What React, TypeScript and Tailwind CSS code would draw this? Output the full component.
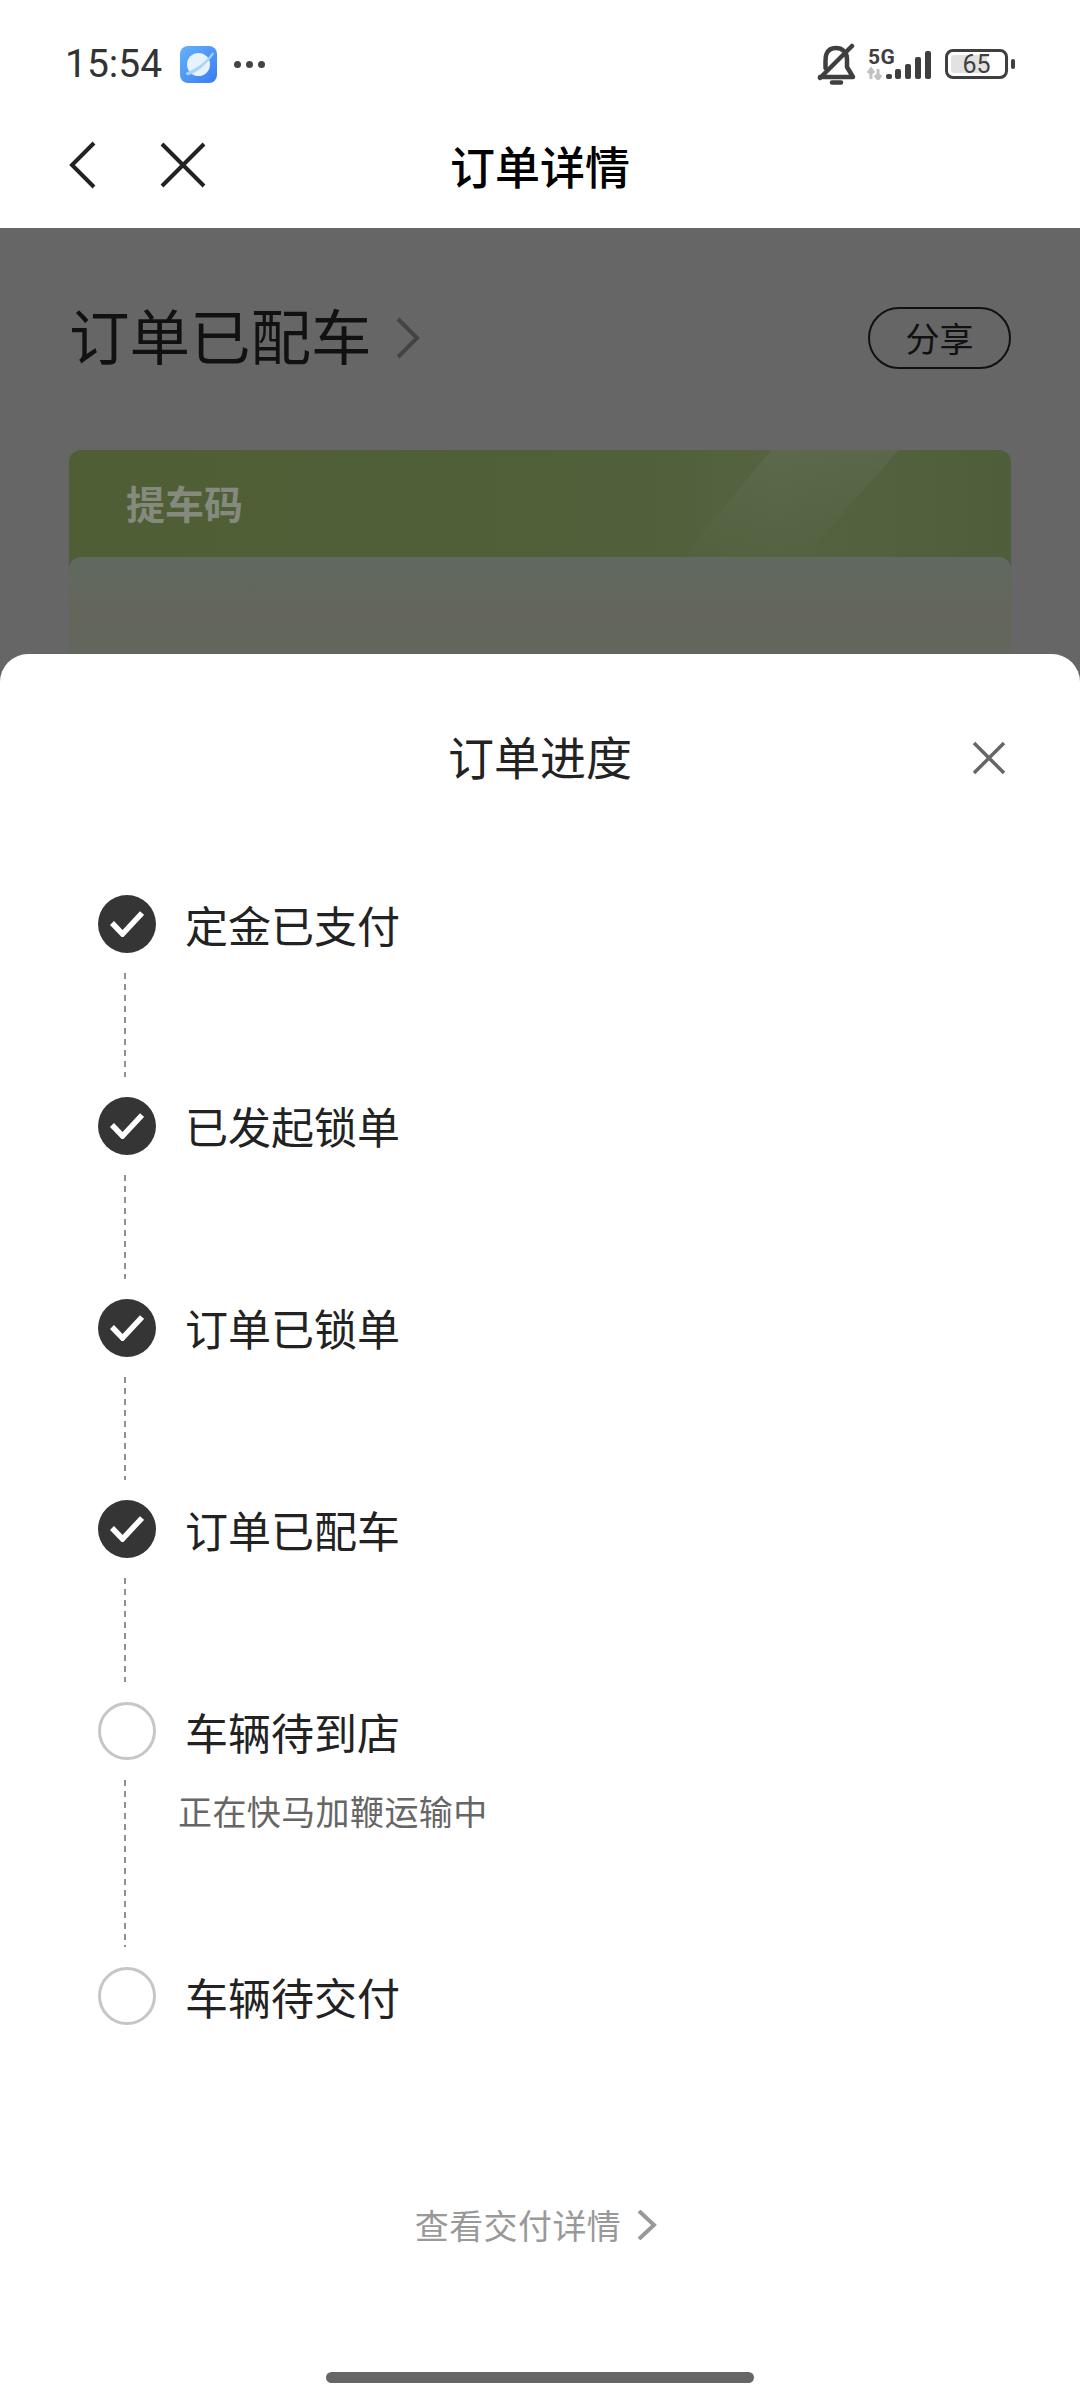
// Order progress sheet over the dimmed order detail page.
import React from "react";

const CJK = "font-['Noto_Sans_CJK_SC','Noto_Sans',sans-serif]";

type Step = { label: string; done: boolean; note?: string };

const steps: Step[] = [
  { label: "定金已支付", done: true },
  { label: "已发起锁单", done: true },
  { label: "订单已锁单", done: true },
  { label: "订单已配车", done: true },
  { label: "车辆待到店", done: false, note: "正在快马加鞭运输中" },
  { label: "车辆待交付", done: false },
];

const StatusBar: React.FC = () => (
  <div className="h-[112px] pt-[16px] pl-[65px] pr-[65px] flex items-center justify-between">
    <div className="flex items-center">
      <span className="font-['Roboto',sans-serif] text-[39px] leading-none text-[#333]">15:54</span>
      {/* browser app icon */}
      <svg className="ml-[18px]" width="37" height="37" viewBox="0 0 37 37">
        <defs>
          <linearGradient id="app" x1="0" y1="0" x2="1" y2="1">
            <stop offset="0" stopColor="#63b3fa" />
            <stop offset="1" stopColor="#3a7cf2" />
          </linearGradient>
        </defs>
        <rect width="37" height="37" rx="8" fill="url(#app)" />
        <circle cx="18.5" cy="18.5" r="11.5" fill="#e6f2fd" />
        <path d="M7 26 C14 24 26 16 32 7 C33 6 35 6 33 9 C27 18 16 27 9 29 C6 30 5 27 7 26 Z" fill="#a9d4fa" />
      </svg>
      <div className="ml-[17px] flex gap-[5px]">
        <span className="w-[7px] h-[7px] rounded-full bg-[#444]" />
        <span className="w-[7px] h-[7px] rounded-full bg-[#444]" />
        <span className="w-[7px] h-[7px] rounded-full bg-[#444]" />
      </div>
    </div>
    <div className="flex items-center">
      {/* muted bell */}
      <svg width="40" height="42" viewBox="0 0 40 42" fill="none" stroke="#3f3f3f" strokeWidth="4.5" strokeLinecap="round" strokeLinejoin="round">
        <path d="M3 34 H36 L30 24 V16 C30 9 25 5 19 5 C15 5 11 7 9.5 11 C8.5 13 8.5 15 8.5 18 V25" />
        <path d="M3 35 L35 3" />
        <path d="M15 39.5 H24" />
      </svg>
      {/* 5G with signal bars */}
      <div className="ml-[10px] relative w-[64px] h-[32px]">
        <span className="absolute left-[1px] top-[-1px] font-['Roboto',sans-serif] font-bold text-[21px] leading-none tracking-[0.5px] text-[#3f3f3f]">5G</span>
        <svg className="absolute left-0 top-0" width="64" height="32" viewBox="0 0 64 32">
          <path d="M4 21 V31 M1 25 L4 21 L7 25 M11 31 V21 M8 27 L11 31 L14 27" stroke="#c2c2c2" strokeWidth="3" fill="none" />
          <rect x="19" y="26" width="6" height="5" rx="2" fill="#3f3f3f" />
          <rect x="28" y="21" width="6" height="10" rx="2" fill="#3f3f3f" />
          <rect x="38" y="16" width="6" height="15" rx="2" fill="#3f3f3f" />
          <rect x="48" y="9" width="6" height="22" rx="2" fill="#3f3f3f" />
          <rect x="58" y="3" width="6" height="28" rx="2" fill="#3f3f3f" />
        </svg>
      </div>
      {/* battery */}
      <div className="ml-[14px] flex items-center">
        <div className="relative w-[63px] h-[30px] rounded-[8px] border-[3px] border-[#3f3f3f] flex items-center justify-center">
          <div className="absolute left-[3px] top-[3px] bottom-[3px] w-[36px] rounded-[3px] bg-[#e2e2e2]" />
          <span className="relative font-['Roboto',sans-serif] text-[25px] leading-none text-[#3f3f3f]">65</span>
        </div>
        <div className="ml-[3px] w-[4px] h-[10px] rounded-[2px] bg-[#3f3f3f]" />
      </div>
    </div>
  </div>
);

const NavBar: React.FC = () => (
  <div className="h-[116px] pb-[10px] pl-[68px] pr-[68px] grid grid-cols-[1fr_auto_1fr] items-center">
    <div className="flex items-center gap-[64px]">
      <svg width="28" height="48" viewBox="0 0 28 48" fill="none" stroke="#222" strokeWidth="4">
        <path d="M26 2 L4 24 L26 46" />
      </svg>
      <svg width="46" height="46" viewBox="0 0 46 46" fill="none" stroke="#222" strokeWidth="4">
        <path d="M2 2 L44 44 M44 2 L2 44" />
      </svg>
    </div>
    <h1 className={`${CJK} text-[45px] leading-none font-medium text-black`}>订单详情</h1>
    <div />
  </div>
);

const DimmedPage: React.FC = () => (
  <div className="h-[426px] overflow-hidden px-[69px] pt-[78px]">
    <div className="flex items-center justify-between h-[64px]">
      <div className="flex items-center">
        <span className={`${CJK} text-[60.5px] leading-none text-[#111] pb-[7px]`}>订单已配车</span>
        <svg className="ml-[24px]" width="24" height="42" viewBox="0 0 24 42" fill="none" stroke="#444" strokeWidth="4">
          <path d="M2 2 L21 21 L2 40" />
        </svg>
      </div>
      <div className={`${CJK} w-[143px] h-[62px] rounded-[31px] border-2 border-[#111] flex items-center justify-center text-[34px] leading-none text-[#111]`}>
        分享
      </div>
    </div>
    <div className="mt-[80px] relative h-[300px] rounded-[12px] bg-[linear-gradient(90deg,#4f5e34,#50603a_60%,#556342_75%,#4f5e3a)] overflow-hidden">
      {/* light band across the top right of the card */}
      <svg className="absolute right-0 top-0" width="400" height="110" viewBox="0 0 400 110">
        <defs>
          <linearGradient id="band" x1="0" y1="0" x2="0" y2="1">
            <stop offset="0" stopColor="#66725a" stopOpacity="0.4" />
            <stop offset="1" stopColor="#66725a" stopOpacity="0" />
          </linearGradient>
        </defs>
        <path d="M70 110 L160 0 H288 L190 110 Z" fill="url(#band)" />
      </svg>
      <div className={`${CJK} pl-[57px] pt-[33px] text-[39px] leading-none font-bold text-[#858a7e] relative`}>提车码</div>
      <div className="absolute left-0 right-0 top-[107px] bottom-0 rounded-[12px] bg-[linear-gradient(180deg,#5f6a60,#64665c_25%,#61665d)]" />
    </div>
  </div>
);

const StepRow: React.FC<{ step: Step; last: boolean }> = ({ step, last }) => (
  <div className="flex flex-col">
    <div className="flex items-center h-[58px]">
      {step.done ? (
        <div className="w-[58px] h-[58px] rounded-full bg-[#353535] flex items-center justify-center">
          <svg width="34" height="26" viewBox="0 0 34 26" fill="none" stroke="#fff" strokeWidth="5.5">
            <path d="M2 12 L12.5 23 L32 2" />
          </svg>
        </div>
      ) : (
        <div className="w-[58px] h-[58px] rounded-full border-[3px] border-[#c6c6c6]" />
      )}
      <span className={`${CJK} ml-[29px] text-[43px] leading-none text-[#222]`}>{step.label}</span>
    </div>
    {!last && (
      <div className={`relative ml-[26px] w-[2px] my-[20px] bg-[repeating-linear-gradient(to_bottom,#8f8f8f_0,#8f8f8f_6px,transparent_6px,transparent_11px)] ${step.note ? "h-[167px]" : "h-[103.75px]"}`}>
        {step.note && (
          <span className={`${CJK} absolute left-[54px] top-[14px] whitespace-nowrap text-[34px] leading-none tracking-[0.4px] text-[#666]`}>
            {step.note}
          </span>
        )}
      </div>
    )}
  </div>
);

const ProgressSheet: React.FC = () => (
  <div className="flex-1 bg-white rounded-t-[28px] flex flex-col relative">
    <div className="h-[208px] pb-[6px] pr-[74px] pl-[74px] grid grid-cols-[1fr_auto_1fr] items-center">
      <div />
      <h2 className={`${CJK} text-[46px] leading-none text-[#222] font-normal`}>订单进度</h2>
      <svg className="justify-self-end mt-[6px]" width="34" height="34" viewBox="0 0 34 34" fill="none" stroke="#666" strokeWidth="3.5">
        <path d="M2 2 L32 32 M32 2 L2 32" />
      </svg>
    </div>
    <div className="pl-[98px] pt-[33px]">
      {steps.map((step, i) => (
        <StepRow key={step.label} step={step} last={i === steps.length - 1} />
      ))}
    </div>
    <div className="mt-[183px] pr-[8px] flex items-center justify-center">
      <span className={`${CJK} text-[34px] leading-none tracking-[0.4px] text-[#999]`}>查看交付详情</span>
      <svg className="ml-[16px]" width="20" height="30" viewBox="0 0 20 30" fill="none" stroke="#999" strokeWidth="4">
        <path d="M2 1 L17 15 L2 29" />
      </svg>
    </div>
    <div className="mt-auto mb-[17px] self-center w-[428px] h-[11px] rounded-full bg-[#666]" />
  </div>
);

const App: React.FC = () => (
  <div className="w-[1080px] h-[2400px] bg-[#666666] flex flex-col overflow-hidden">
    <div className="bg-white h-[228px]">
      <StatusBar />
      <NavBar />
    </div>
    <DimmedPage />
    <ProgressSheet />
  </div>
);

export default App;
